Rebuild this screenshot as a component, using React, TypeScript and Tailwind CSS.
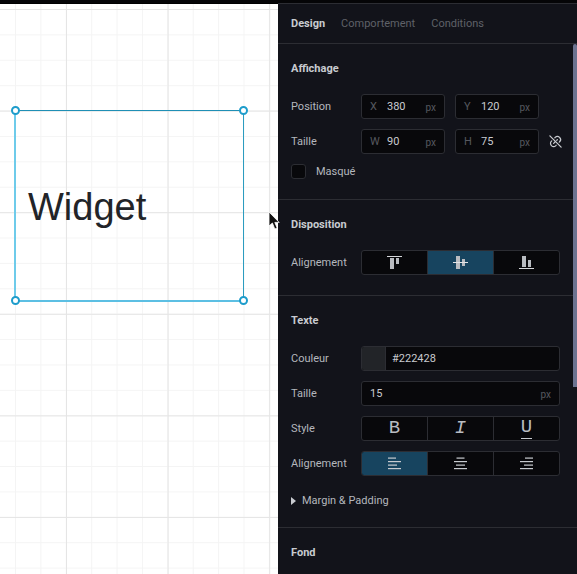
import type { ReactNode } from "react";
import { TbLinkOff } from "react-icons/tb";

const font = "font-['Roboto',sans-serif]";

function SectionTitle({ children }: { children: ReactNode }) {
  return (
    <div className="mb-[18px] h-4 pt-px text-[11px] leading-4 font-bold text-[#c8cbd0]">
      {children}
    </div>
  );
}

function Label({ children }: { children: ReactNode }) {
  return <div className="w-[70px] shrink-0 pt-px text-[11px] text-[#b4b7bd]">{children}</div>;
}

function NumberField({ axis, value }: { axis: string; value: string }) {
  return (
    <div className="flex h-[25px] w-[84px] items-center rounded-[3px] border border-[#2c2d33] bg-[#08080b] px-2 pt-px text-[11px]">
      <span className="w-[17px] text-[#56585f]">{axis}</span>
      <span className="flex-1 text-[#c8cbd0]">{value}</span>
      <span className="text-[10px] text-[#56585f]">px</span>
    </div>
  );
}

function Segments({ active, items }: { active?: number; items: ReactNode[] }) {
  return (
    <div className="flex h-[25px] w-[199px] overflow-hidden rounded-[3px] border border-[#2c2d33] bg-[#08080b]">
      {items.map((item, i) => (
        <div
          key={i}
          className={
            "flex flex-1 items-center justify-center text-[#b9bcc1] " +
            (i > 0 ? "border-l border-[#2c2d33] " : "") +
            (i === active ? "bg-[#17445f]" : "")
          }
        >
          {item}
        </div>
      ))}
    </div>
  );
}

function AlignTop() {
  return (
    <svg width="15" height="13" viewBox="0 0 15 13" fill="#b9bcc1">
      <rect x="0" y="0" width="15" height="1" fill="#d5d7da" />
      <rect x="3" y="2" width="4" height="11" />
      <rect x="9" y="2" width="3" height="6" />
    </svg>
  );
}

function AlignMiddle() {
  return (
    <svg width="15" height="13" viewBox="0 0 15 13" fill="#b9bcc1">
      <rect x="3" y="0" width="4" height="13" />
      <rect x="9" y="3" width="3" height="7" />
      <rect x="0" y="6" width="15" height="1" fill="#e2e4e6" />
    </svg>
  );
}

function AlignBottom() {
  return (
    <svg width="15" height="13" viewBox="0 0 15 13" fill="#b9bcc1">
      <rect x="3" y="0" width="4" height="11" />
      <rect x="9" y="4" width="3" height="7" />
      <rect x="0" y="12" width="15" height="1" fill="#d5d7da" />
    </svg>
  );
}

function TextAlign({ side }: { side: "left" | "center" | "right" }) {
  const rows = [
    [0.5, 8],
    [4, 13],
    [7.5, 9],
    [11, 13],
  ];
  return (
    <svg width="13" height="13" viewBox="0 0 13 13" fill="#c8cbd0">
      {rows.map(([y, w]) => (
        <rect
          key={y}
          y={y}
          height="1.2"
          width={w}
          x={side === "left" ? 0 : side === "center" ? (13 - w) / 2 : 13 - w}
        />
      ))}
    </svg>
  );
}

function StyleLetter({ children, className = "" }: { children: ReactNode; className?: string }) {
  return (
    <span className={"font-['Liberation_Mono',monospace] text-[19px] leading-none " + className}>
      {children}
    </span>
  );
}

function Handle({ className }: { className: string }) {
  return (
    <div
      className={
        "absolute h-[9px] w-[9px] rounded-full border-2 border-[#1d9ccb] bg-white " +
        className
      }
    />
  );
}

export default function App() {
  return (
    <div className={"relative flex h-screen w-screen flex-col overflow-hidden bg-black " + font}>
      <div className="h-[3px] shrink-0 bg-[#050507]" />
      <div className="flex min-h-0 flex-1">
        <div className="relative mt-px flex-1 bg-white bg-[linear-gradient(to_right,#e5e5e5_1px,transparent_1px),linear-gradient(to_bottom,#e5e5e5_1px,transparent_1px),linear-gradient(to_right,#f4f4f4_1px,transparent_1px),linear-gradient(to_bottom,#f4f4f4_1px,transparent_1px)] bg-[size:101.6px_101.6px,101.6px_101.6px,25.4px_25.4px,25.4px_25.4px] bg-[position:66px_0,0_5px,15px_0,0_5px]">
          <div className="absolute top-[106px] left-[14px] flex h-[192px] w-[230px] items-center border-t border-r border-b-2 border-l-2 border-t-[#1f8fb5] border-r-[#2b9cc0] border-b-[#5cbfe3] border-l-[#6ecbea] pt-[3px] pl-3 font-['Liberation_Sans',sans-serif] text-[38px] text-[#222428]">
            Widget
            <Handle className="-top-[5px] -left-[5px]" />
            <Handle className="-top-[5px] -right-[5px]" />
            <Handle className="-bottom-[5px] -left-[5px]" />
            <Handle className="-right-[5px] -bottom-[5px]" />
          </div>
        </div>

        <div className="relative w-[299px] shrink-0 border-t border-[#2c2d33] bg-[#12131a]">
          <div className="flex h-10 items-center gap-4 border-b border-[#2c2d33] px-[13px] pt-px text-[11px] text-[#5f6168]">
            <span className="font-bold text-[#c8cbd0]">Design</span>
            <span>Comportement</span>
            <span>Conditions</span>
          </div>

          <div className="border-b border-[#2c2d33] px-[13px] pt-4 pb-5">
            <SectionTitle>Affichage</SectionTitle>
            <div className="flex flex-col gap-2.5">
              <div className="flex items-center">
                <Label>Position</Label>
                <div className="flex gap-2.5">
                  <NumberField axis="X" value="380" />
                  <NumberField axis="Y" value="120" />
                </div>
              </div>
              <div className="flex items-center">
                <Label>Taille</Label>
                <div className="flex gap-2.5">
                  <NumberField axis="W" value="90" />
                  <NumberField axis="H" value="75" />
                </div>
                <TbLinkOff className="ml-[9px] h-[15px] w-[15px] text-[#c8cbd0]" />
              </div>
            </div>
            <div className="mt-2.5 flex h-[15px] items-center gap-[10px]">
              <div className="h-[15px] w-[15px] rounded-[3px] border border-[#2c2d33] bg-[#08080b]" />
              <span className="pt-px text-[11px] text-[#b4b7bd]">Masqué</span>
            </div>
          </div>

          <div className="border-b border-[#2c2d33] px-[13px] pt-4 pb-5">
            <SectionTitle>Disposition</SectionTitle>
            <div className="flex items-center">
              <Label>Alignement</Label>
              <Segments
                active={1}
                items={[<AlignTop />, <AlignMiddle />, <AlignBottom />]}
              />
            </div>
          </div>

          <div className="border-b border-[#2c2d33] px-[13px] pt-4 pb-[18px]">
            <SectionTitle>Texte</SectionTitle>
            <div className="flex flex-col gap-2.5">
              <div className="flex items-center">
                <Label>Couleur</Label>
                <div className="flex h-[25px] w-[199px] overflow-hidden rounded-[3px] border border-[#2c2d33] bg-[#08080b] text-[11px] text-[#c8cbd0]">
                  <div className="w-6 border-r border-[#2c2d33] bg-[#222428]" />
                  <div className="flex items-center pt-px pl-[6px]">#222428</div>
                </div>
              </div>
              <div className="flex items-center">
                <Label>Taille</Label>
                <div className="flex h-[25px] w-[199px] items-center justify-between rounded-[3px] border border-[#2c2d33] bg-[#08080b] px-2 pt-px text-[11px] text-[#c8cbd0]">
                  <span>15</span>
                  <span className="text-[10px] text-[#56585f]">px</span>
                </div>
              </div>
              <div className="flex items-center">
                <Label>Style</Label>
                <Segments
                  items={[
                    <StyleLetter>B</StyleLetter>,
                    <StyleLetter className="italic">I</StyleLetter>,
                    <StyleLetter className="border-b border-[#c8cbd0] pb-px">U</StyleLetter>,
                  ]}
                />
              </div>
              <div className="flex items-center">
                <Label>Alignement</Label>
                <Segments
                  active={0}
                  items={[
                    <TextAlign side="left" />,
                    <TextAlign side="center" />,
                    <TextAlign side="right" />,
                  ]}
                />
              </div>
            </div>
            <div className="mt-[17px] flex h-4 items-center gap-[6px] pt-px text-[11px] text-[#b4b7bd]">
              <svg className="-mt-px" width="5" height="8" viewBox="0 0 5 8" fill="#c8cbd0">
                <path d="M0 0l5 4-5 4z" />
              </svg>
              Margin &amp; Padding
            </div>
          </div>

          <div className="px-[13px] pt-4">
            <div className="h-4 pt-px text-[11px] leading-4 font-bold text-[#c8cbd0]">Fond</div>
          </div>

          <div className="absolute top-10 right-0 h-[343px] w-1 rounded-t-[2px] bg-[#6c7390]" />
        </div>
      </div>

      <svg
        className="absolute top-[211px] left-[268px]"
        width="13"
        height="20"
        viewBox="0 0 13 20"
      >
        <path
          d="M1 1v14l3.4-3 2.4 6 2.4-1-2.4-5.6h4.4z"
          fill="#111"
          stroke="#fff"
          strokeWidth="0.8"
        />
      </svg>
    </div>
  );
}
